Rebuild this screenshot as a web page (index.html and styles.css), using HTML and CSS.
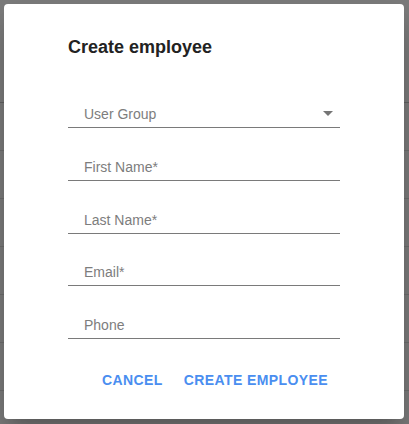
FILE: index.html
```html
<!DOCTYPE html>
<html>
<head>
<meta charset="utf-8">
<title>Create employee</title>
<link rel="stylesheet" href="styles.css">
</head>
<body>
	<div class="page">
		<div class="table">
			<div class="row head"><span class="cell">Email</span></div>
			<div class="row"><span class="cell">Employee</span></div>
			<div class="row"><span class="cell">Employee</span></div>
			<div class="row"><span class="cell">Employee</span></div>
			<div class="row"><span class="cell">Employee</span></div>
			<div class="row"><span class="cell">Employee</span></div>
			<div class="row"><span class="cell">Employee</span></div>
			<div class="row"><span class="cell">Employee</span><span class="mail">user.ma.1627920@mail.com</span></div>
		</div>
		<div class="overlay"></div>
	</div>

	<div class="dialog">
		<h2 class="title">Create employee</h2>
		<div class="fields">
			<div class="field select">
				<span class="label">User Group</span>
				<svg class="arrow" width="10" height="5" viewBox="0 0 10 5"><path d="M0 0h10L5 5z" fill="#757575"/></svg>
			</div>
			<div class="field"><span class="label">First Name*</span></div>
			<div class="field"><span class="label">Last Name*</span></div>
			<div class="field"><span class="label">Email*</span></div>
			<div class="field"><span class="label">Phone</span></div>
		</div>
		<div class="actions">
			<button class="btn">Cancel</button>
			<button class="btn">Create employee</button>
		</div>
	</div>
</body>
</html>
```

FILE: styles.css
```css
html, body {
	margin: 0;
	height: 100%;
	overflow: hidden;
}
body {
	font-family: "Liberation Sans", Arial, sans-serif;
	background: #fff;
}

.page {
	position: relative;
	height: 100%;
}
.table {
	margin-left: -60px;
	padding-top: 7px;
}
.row {
	height: 47px;
	border-bottom: 1px solid #e0e0e0;
	display: flex;
	align-items: center;
	font-size: 13px;
	color: #222;
}
.row.head {
	height: 95px;
	font-weight: bold;
	border-bottom-color: #c8c8c8;
}
.cell {
	width: 60px;
	padding-top: 4px;
}
.mail {
	margin-left: 115px;
	padding-top: 44px;
}
.overlay {
	position: absolute;
	inset: 0;
	background: rgba(0, 0, 0, 0.52);
}

.dialog {
	position: absolute;
	top: 4px;
	left: 4px;
	width: 400px;
	height: 415px;
	box-sizing: border-box;
	background: #fff;
	border-radius: 4px;
	box-shadow: 0 11px 15px -7px rgba(0,0,0,0.2), 0 24px 38px 3px rgba(0,0,0,0.14);
	padding: 31px 64px 0;
}
.title {
	margin: 0;
	font-size: 18px;
	line-height: 24px;
	font-weight: bold;
	color: #222;
}

.fields {
	margin-top: 16px;
}
.field {
	position: relative;
	height: 52px;
	border-bottom: 1px solid #7a7a7a;
	box-sizing: border-box;
	display: flex;
	align-items: flex-end;
	padding: 0 0 5px 16px;
	margin-top: 0.75px;
}
.field:first-child {
	margin-top: 0;
	height: 53px;
}
.label {
	font-size: 14px;
	line-height: 16px;
	color: #7d7d7d;
}
.arrow {
	position: absolute;
	right: 7px;
	bottom: 11px;
}

.actions {
	display: flex;
	justify-content: flex-end;
	margin: 25px 4px 0 0;
}
.btn {
	margin-left: 7px;
	padding: 6px 8px;
	border: 0;
	background: none;
	font-family: inherit;
	font-size: 14px;
	font-weight: bold;
	line-height: 20px;
	letter-spacing: 0.4px;
	text-transform: uppercase;
	color: #4a8ef0;
	cursor: pointer;
}
.btn:first-child {
	margin-left: 0;
	margin-right: -2px;
}
```
